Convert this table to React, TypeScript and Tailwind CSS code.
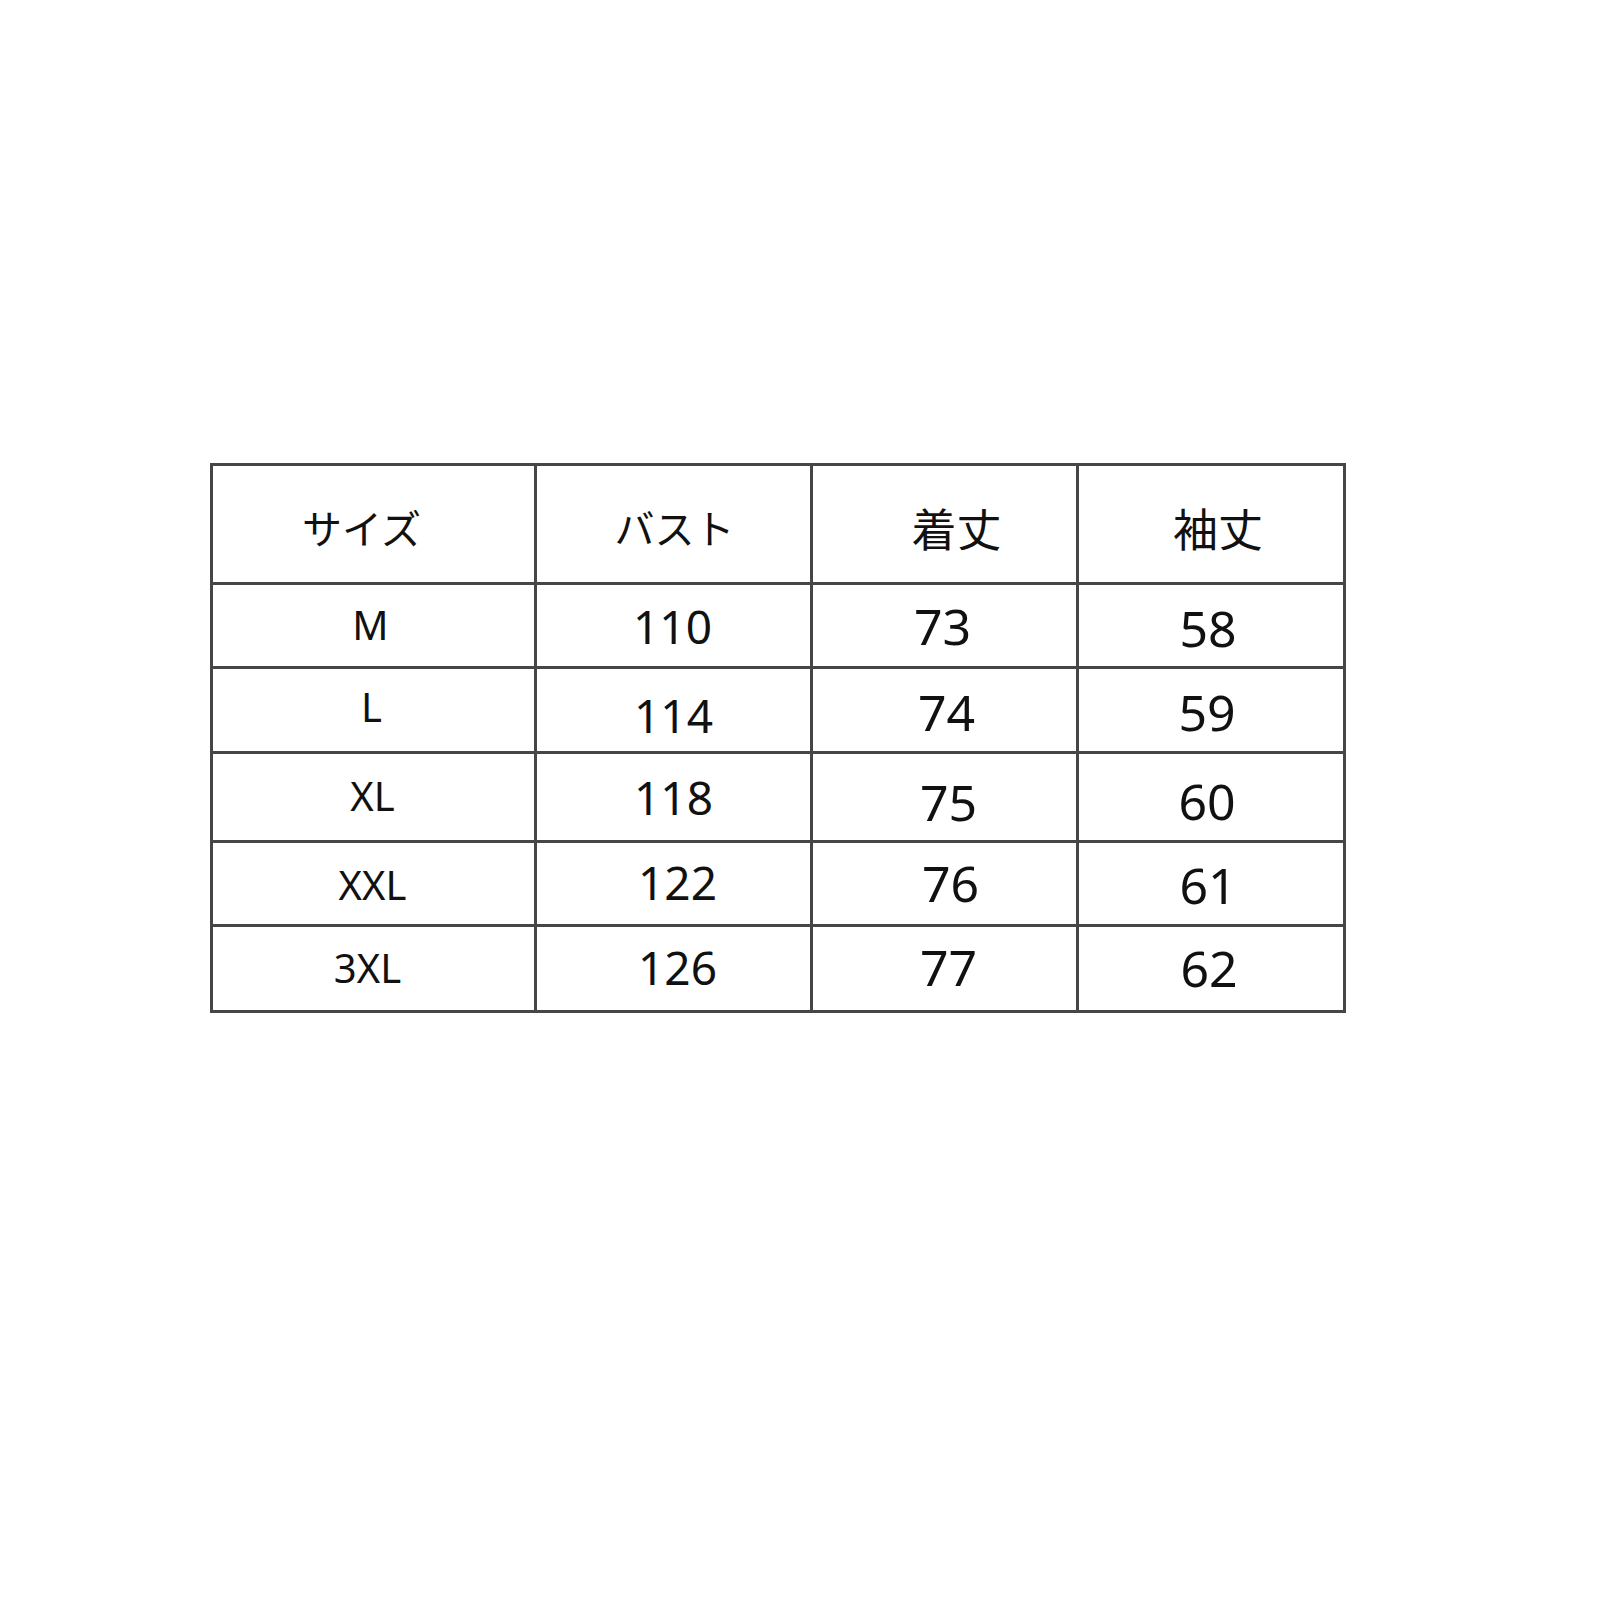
import React from 'react';

type Cell = { text: string; cls: string };

// header row: katakana / kanji labels
const header: Cell[] = [
  { text: 'サイズ', cls: 'text-[40px] -translate-x-[12px] translate-y-[5px]' },
  { text: 'バスト', cls: 'text-[40px] translate-x-[1px] translate-y-[5px]' },
  { text: '着丈', cls: 'text-[45px] translate-x-[12px] translate-y-[5px]' },
  { text: '袖丈', cls: 'text-[45px] translate-x-[7px] translate-y-[5px]' },
];

// body rows: size / bust / length / sleeve, each nudged like the original chart
const rows: Cell[][] = [
  [
    { text: 'M', cls: 'text-[40px] -translate-x-[3px] -translate-y-[1px]' },
    { text: '110', cls: 'text-[46px] -translate-x-[1px] translate-y-[0px]' },
    { text: '73', cls: 'text-[50px] -translate-x-[2px] translate-y-[0px]' },
    { text: '58', cls: 'text-[50px] -translate-x-[3px] translate-y-[2px]' },
  ],
  [
    { text: 'L', cls: 'text-[40px] -translate-x-[2px] -translate-y-[3px]' },
    { text: '114', cls: 'text-[46px] translate-x-[0px] translate-y-[5px]' },
    { text: '74', cls: 'text-[50px] translate-x-[2px] translate-y-[2px]' },
    { text: '59', cls: 'text-[50px] -translate-x-[4px] translate-y-[2px]' },
  ],
  [
    { text: 'XL', cls: 'text-[40px] -translate-x-[1px] -translate-y-[1px]' },
    { text: '118', cls: 'text-[46px] translate-x-[0px] translate-y-[0px]' },
    { text: '75', cls: 'text-[50px] translate-x-[4px] translate-y-[5px]' },
    { text: '60', cls: 'text-[50px] -translate-x-[4px] translate-y-[4px]' },
  ],
  [
    { text: 'XXL', cls: 'text-[40px] -translate-x-[1px] translate-y-[1px]' },
    { text: '122', cls: 'text-[46px] translate-x-[4px] -translate-y-[2px]' },
    { text: '76', cls: 'text-[50px] translate-x-[6px] -translate-y-[1px]' },
    { text: '61', cls: 'text-[50px] -translate-x-[3px] translate-y-[1px]' },
  ],
  [
    { text: '3XL', cls: 'text-[40px] -translate-x-[6px] -translate-y-[1px]' },
    { text: '126', cls: 'text-[46px] translate-x-[4px] -translate-y-[2px]' },
    { text: '77', cls: 'text-[50px] translate-x-[4px] -translate-y-[2px]' },
    { text: '62', cls: 'text-[50px] -translate-x-[2px] -translate-y-[1px]' },
  ],
];

const TableCell: React.FC<{ cell: Cell }> = ({ cell }) => (
  <div className="flex items-center justify-center border-r-[3px] border-b-[3px] border-[#464646]">
    <span className={`leading-none whitespace-nowrap ${cell.cls}`}>{cell.text}</span>
  </div>
);

export default function App() {
  return (
    <div className="w-[1600px] h-[1600px] bg-white pt-[463px] pl-[210px] font-['Noto_Sans','Noto_Sans_CJK_JP',sans-serif] text-[#111111]">
      <div className="grid w-fit grid-cols-[324px_276px_266px_267px] grid-rows-[119px_84px_85px_89px_84px_86px] border-l-[3px] border-t-[3px] border-[#464646]">
        {header.map((c) => (
          <TableCell key={c.text} cell={c} />
        ))}
        {rows.map((row) =>
          row.map((c, i) => <TableCell key={`${row[0].text}-${i}`} cell={c} />)
        )}
      </div>
    </div>
  );
}
